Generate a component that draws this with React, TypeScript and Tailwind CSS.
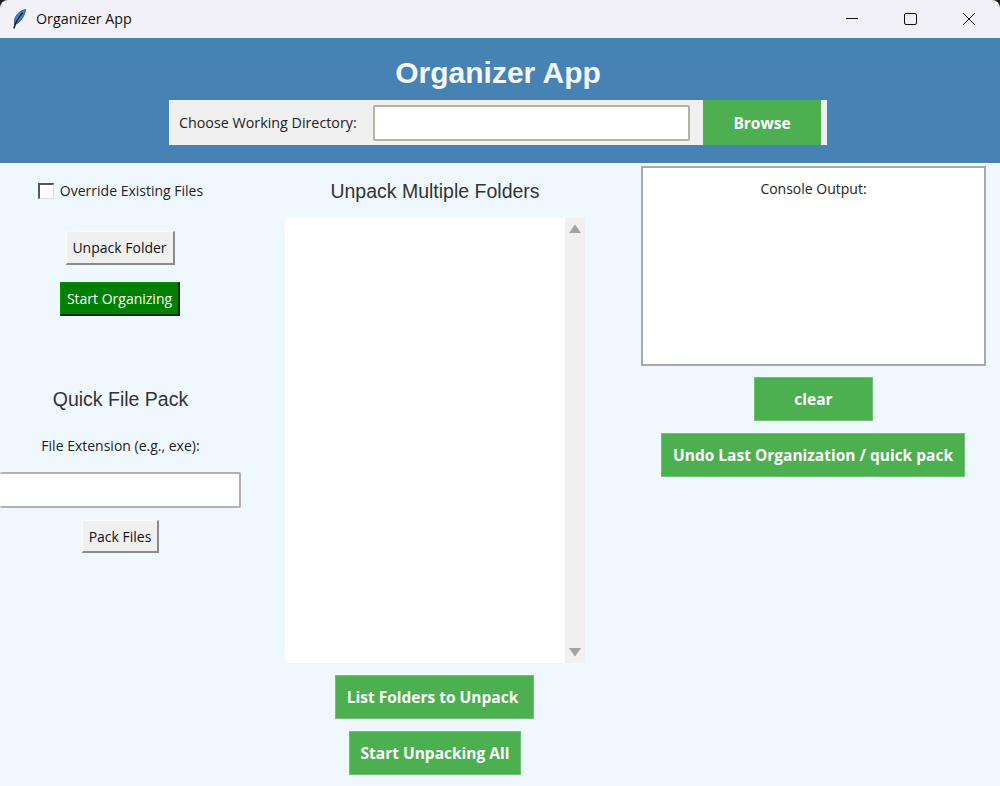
import React from 'react';

const uiFont = "font-['Open_Sans','Noto_Sans',sans-serif]";

const GreenButton: React.FC<{ label: string; className: string }> = ({ label, className }) => (
    <button className={`h-[44px] bg-[#4caf50] border border-[#6fc073] pt-[2px] text-white text-[15.5px] font-bold ${className}`}>
        {label}
    </button>
);

const RaisedButton: React.FC<{ label: string; className: string }> = ({ label, className }) => (
    <button className={`bg-[#f0f0f0] border border-[#fbfbfb] border-r-2 border-b-2 border-r-[#8a8a8a] border-b-[#8a8a8a] text-[14px] text-[#111] ${className}`}>
        {label}
    </button>
);

const FeatherIcon: React.FC = () => (
    <svg width="14" height="20" viewBox="0 0 14 20">
        <path d="M13.500 0.500C8 1.500 3.500 6 2.500 11L2.500 15.500C6 14.500 9 12 10.800 8.500C12.300 6 13.200 3.500 13.500 0.500Z" fill="#3f86dc" stroke="#2b4260" strokeWidth="0.800" />
        <path d="M11 3.500C7.500 7 4 12 1.800 19.500" fill="none" stroke="#161d28" strokeWidth="1.500" />
    </svg>
);

const TitleBar: React.FC = () => (
    <div className="flex h-[38px] items-center bg-[#f3f1f8] rounded-t-[8px]">
        <div className="ml-[12px] w-[14px] flex"><FeatherIcon /></div>
        <span className="ml-[10px] text-[14.3px] text-[#111]">Organizer App</span>
        <div className="ml-auto flex items-center">
            <svg width="14" height="14" viewBox="0 0 14 14" className="mr-[44px]"><path d="M0 6.500H12" stroke="#111" strokeWidth="1" /></svg>
            <svg width="14" height="14" viewBox="0 0 14 14" className="mr-[44px]"><rect x="0.500" y="1.500" width="12" height="11" rx="1.500" fill="none" stroke="#111" strokeWidth="1" /></svg>
            <svg width="14" height="14" viewBox="0 0 14 14" className="mr-[24px]"><path d="M1 1L13 13M13 1L1 13" stroke="#111" strokeWidth="1" /></svg>
        </div>
    </div>
);

const Header: React.FC = () => (
    <header className="flex h-[125px] flex-col items-center bg-[#4682b4]">
        <h1 className="mt-[17px] mr-[4px] h-[36px] text-[30px] leading-[36px] font-bold text-[#f4f8fb] font-['Liberation_Sans',sans-serif]">Organizer App</h1>
        <div className="mt-[9px] mr-[4px] flex h-[45px] w-[658px] items-center bg-[#f0f0f0]">
            <label className="ml-[10px] w-[194px] text-[14.3px] text-[#222]">Choose Working Directory:</label>
            <input className="h-[36px] w-[317px] rounded-[2px] border-2 border-[#b5b1a8] bg-white outline-none" />
            <button className="ml-[13px] h-[45px] w-[118px] bg-[#4caf50] pt-[2px] text-[15.5px] font-bold text-white">Browse</button>
        </div>
    </header>
);

const LeftColumn: React.FC = () => (
    <div className="flex w-[241px] flex-col items-center">
        <label className="mt-[20px] flex h-[16px] items-center">
            <span className="h-[16px] w-[16px] border border-[#dcdcdc] border-t-2 border-l-2 border-t-[#555] border-l-[#555] bg-white" />
            <span className="ml-[6px] text-[14px] leading-[16px] text-[#222]">Override Existing Files</span>
        </label>
        <RaisedButton label="Unpack Folder" className="mt-[32px] mr-[1px] h-[34px] w-[109px]" />
        <button className="mt-[17px] mr-[1px] h-[34px] w-[120px] border border-[#0a8f0a] border-r-2 border-b-2 border-r-[#0b2b0b] border-b-[#0b2b0b] bg-[#008000] text-[14px] text-white">Start Organizing</button>
        <h2 className="mt-[71px] h-[24px] text-[19.5px] leading-[24px] text-[#333] font-['Liberation_Sans',sans-serif]">Quick File Pack</h2>
        <p className="mt-[25px] h-[20px] text-[14px] leading-[20px] text-[#222]">File Extension (e.g., exe):</p>
        <input className="mt-[16px] h-[36px] w-[241px] rounded-[2px] border-2 border-l-0 border-[#b5b1a8] bg-white outline-none" />
        <RaisedButton label="Pack Files" className="mt-[12px] h-[33px] w-[77px]" />
    </div>
);

const MiddleColumn: React.FC = () => (
    <div className="ml-[44px] flex w-[300px] flex-col items-center">
        <h2 className="mt-[16px] h-[24px] text-[19.5px] leading-[24px] text-[#333] font-['Liberation_Sans',sans-serif]">Unpack Multiple Folders</h2>
        <div className="mt-[15px] flex h-[445px] w-[300px] bg-white">
            <div className="flex-1" />
            <div className="flex w-[20px] flex-col items-center justify-between bg-[#f0f0f0] py-[6px]">
                <svg width="12" height="9" viewBox="0 0 12 9"><path d="M6 0.500L12 9H0Z" fill="#a3a3a3" /></svg>
                <svg width="12" height="9" viewBox="0 0 12 9"><path d="M6 8.500L12 0H0Z" fill="#a3a3a3" /></svg>
            </div>
        </div>
        <GreenButton label="List Folders to Unpack" className="mt-[12px] mr-[1px] w-[199px] pr-[4px]" />
        <GreenButton label="Start Unpacking All" className="mt-[12px] w-[172px]" />
    </div>
);

const RightColumn: React.FC = () => (
    <div className="ml-[56px] flex w-[345px] flex-col items-center">
        <div className="mt-[3px] h-[200px] w-[345px] border-2 border-[#a9a9a9] bg-white pt-[12px] text-center text-[14px] leading-[18px] text-[#222]">
            Console Output:
        </div>
        <GreenButton label="clear" className="mt-[11px] w-[119px]" />
        <GreenButton label="Undo Last Organization / quick pack" className="mt-[12px] mr-[1px] w-[304px]" />
    </div>
);

const App: React.FC = () => (
    <div className={`h-[786px] w-[1000px] overflow-hidden bg-[#1a1a1a] ${uiFont}`}>
        <TitleBar />
        <Header />
        <main className="flex h-[623px] bg-[#f0f8ff]">
            <LeftColumn />
            <MiddleColumn />
            <RightColumn />
        </main>
    </div>
);

export default App;
